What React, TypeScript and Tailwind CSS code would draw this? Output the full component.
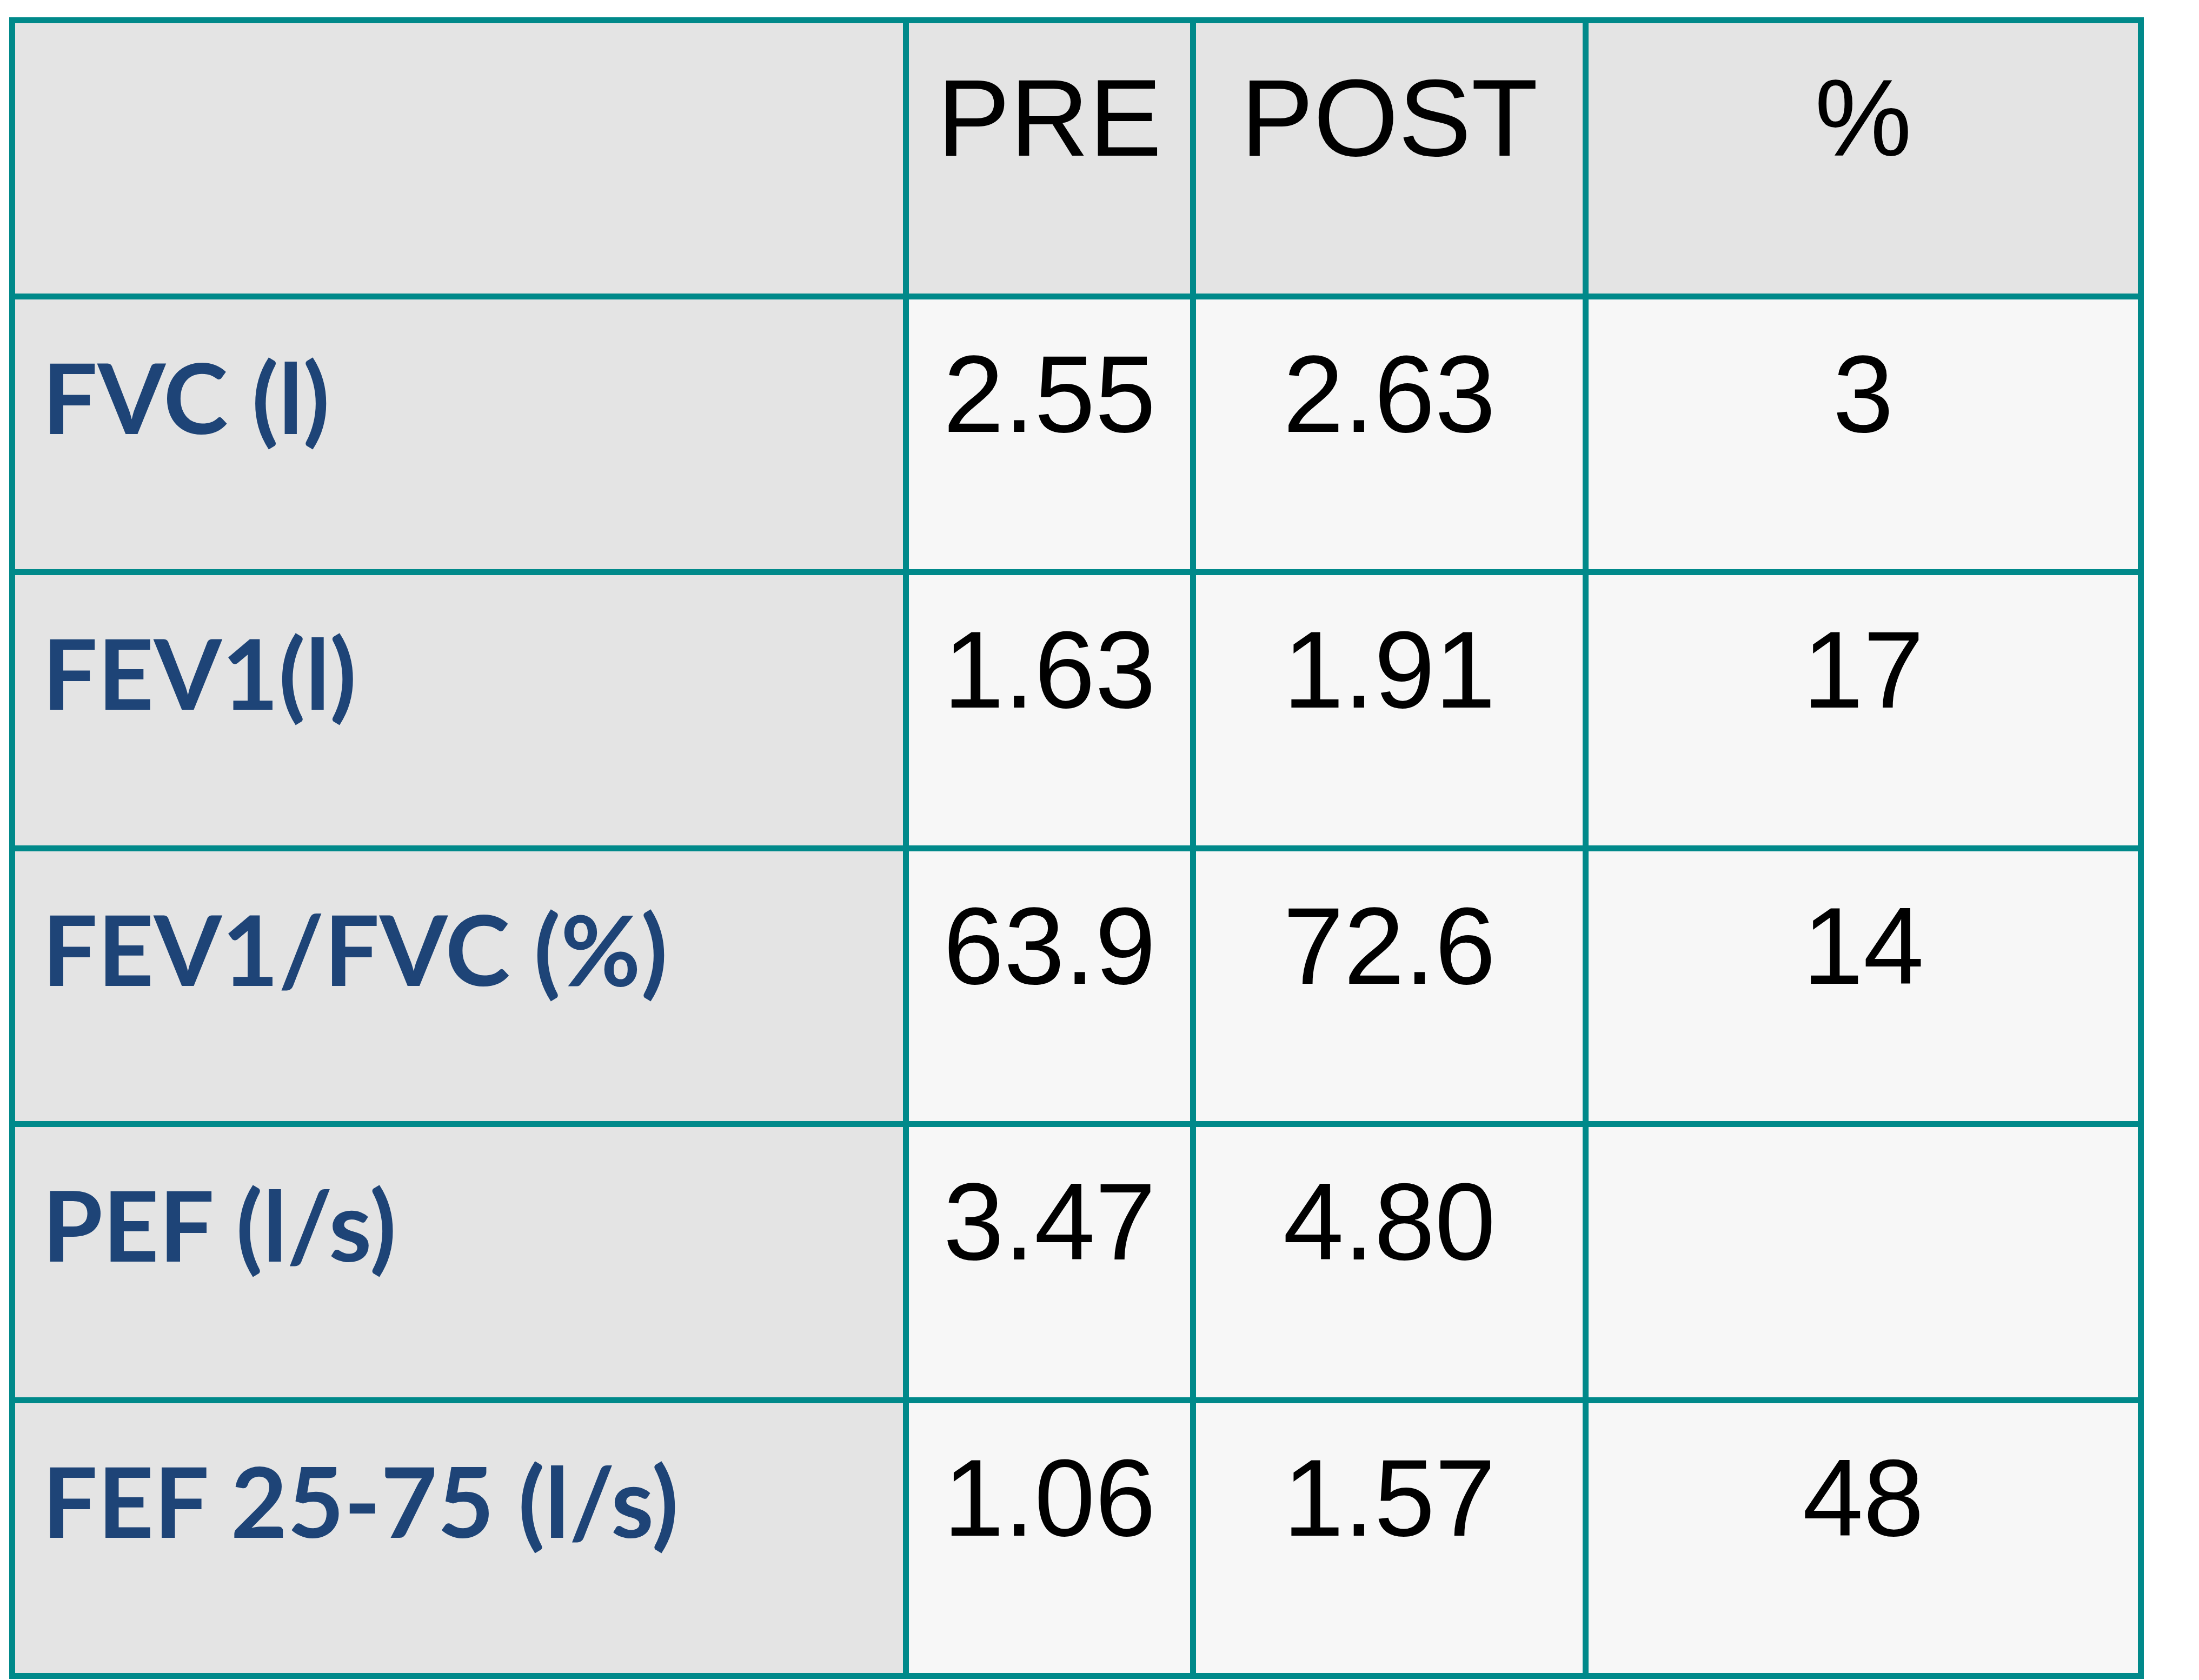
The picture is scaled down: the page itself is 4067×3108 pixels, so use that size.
import React from "react";

const rows: { label: string; pre: string; post: string; pct: string }[] = [
  { label: "FVC (l)", pre: "2.55", post: "2.63", pct: "3" },
  { label: "FEV1(l)", pre: "1.63", post: "1.91", pct: "17" },
  { label: "FEV1/FVC (%)", pre: "63.9", post: "72.6", pct: "14" },
  { label: "PEF (l/s)", pre: "3.47", post: "4.80", pct: "" },
  { label: "FEF 25-75 (l/s)", pre: "1.06", post: "1.57", pct: "48" },
];

const numCls =
  "flex justify-center pt-[59px] text-[202px] leading-[1.15] text-black font-['Liberation_Sans',Arial,sans-serif]";

export default function App() {
  return (
    <div className="min-h-screen bg-white pl-[17px] pt-[32px]">
      <div className="grid w-[3948px] grid-cols-[1642px_520px_715px_1016px] grid-rows-[500px_499px_500px_499px_500px_499px] gap-[11px] border-[11px] border-[#00898a] bg-[#00898a]">
        <div className="bg-[#e4e4e4]" />
        <div className={`bg-[#e4e4e4] ${numCls}`}>PRE</div>
        <div className={`bg-[#e4e4e4] ${numCls}`}>POST</div>
        <div className={`bg-[#e4e4e4] ${numCls}`}>%</div>
        {rows.map((r) => (
          <React.Fragment key={r.label}>
            <div className="bg-[#e4e4e4] pl-[50px] pt-[71px] text-[181px] font-bold leading-[1.2] text-[#1e4477] font-['Lato','Open_Sans',sans-serif]">
              {r.label}
            </div>
            <div className={`bg-[#f7f7f7] ${numCls}`}>{r.pre}</div>
            <div className={`bg-[#f7f7f7] ${numCls}`}>{r.post}</div>
            <div className={`bg-[#f7f7f7] ${numCls}`}>{r.pct}</div>
          </React.Fragment>
        ))}
      </div>
    </div>
  );
}
